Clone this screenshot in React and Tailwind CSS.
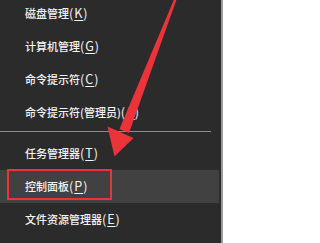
const items = [
  { label: '磁盘管理', key: 'K' },
  { label: '计算机管理', key: 'G' },
  { label: '命令提示符', key: 'C' },
  { label: '命令提示符(管理员)', key: 'A' },
];

const items2 = [
  { label: '任务管理器', key: 'T' },
  { label: '控制面板', key: 'P', active: true },
  { label: '文件资源管理器', key: 'E' },
];

const MenuItem = ({ label, hotkey, active }) => (
  <div
    className={`h-[33px] mr-[2px] flex items-center pl-[25px] text-[11px] text-[#f4f4f4] ${
      active ? 'bg-[#414141]' : ''
    }`}
  >
    <span className="font-medium">
      {label}
      <span className="text-[12.5px] tracking-[1px] font-normal">
        (<span className="underline underline-offset-2">{hotkey}</span>)
      </span>
    </span>
  </div>
);

export default function App() {
  return (
    <div
      className="relative w-[296px] h-[243px] overflow-hidden bg-white flex"
      style={{ fontFamily: '"Noto Sans CJK SC", "Noto Sans", sans-serif' }}
    >
      {/* menu panel */}
      <div className="w-[221px] h-full bg-[#2b2b2b] border-r-2 border-[#9a9a9a] box-content">
        <div className="-mt-[3px]">
          {items.map((it) => (
            <MenuItem key={it.key} label={it.label} hotkey={it.key} />
          ))}
          <div className="h-[8px] pt-[2px] mr-[10px]">
            <div className="h-px bg-[#8c8c8c]" />
          </div>
          {items2.map((it) => (
            <MenuItem key={it.key} label={it.label} hotkey={it.key} active={it.active} />
          ))}
        </div>
      </div>

      {/* red highlight box */}
      <div className="absolute left-[7px] top-[169px] w-[105px] h-[31px] border-[2.5px] border-[#e8353a]" />

      {/* red arrow */}
      <svg className="absolute left-0 top-0" width="296" height="243" viewBox="0 0 296 243">
        <polygon points="173.8,0 176.4,0 129,133 119.5,129" fill="#ec3339" />
        <polygon points="107.5,126.5 133.5,138 114.5,156.5" fill="#ec3339" />
      </svg>
    </div>
  );
}
